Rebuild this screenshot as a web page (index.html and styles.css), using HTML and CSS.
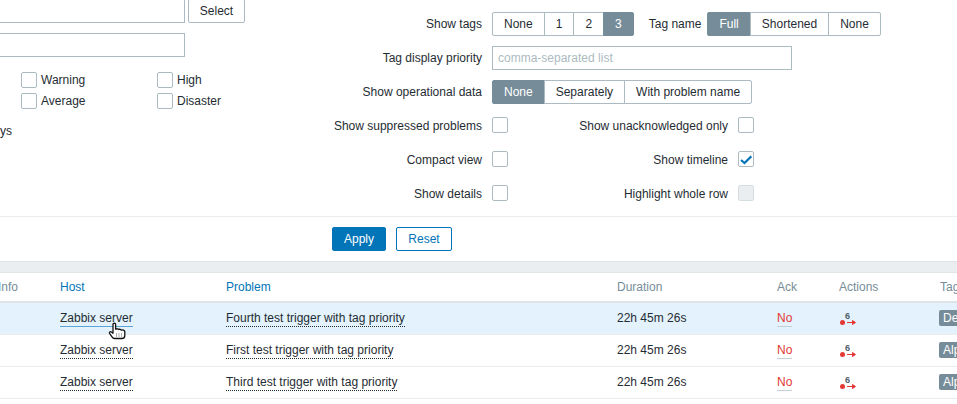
FILE: index.html
```html
<!DOCTYPE html>
<html lang="en">
<head>
<meta charset="utf-8">
<title>Problems</title>
<link rel="stylesheet" href="styles.css">
</head>
<body>
<div class="page">
  <form class="filter">
    <div class="filter-cols">
      <div class="col-left">
        <div class="left-row">
          <input class="text-input wide" type="text">
          <button class="btn-grey" type="button">Select</button>
        </div>
        <div class="left-row">
          <input class="text-input wide" type="text">
        </div>
        <div class="sev-grid">
          <label class="sev"><span class="cb"></span>Warning</label>
          <label class="sev"><span class="cb"></span>High</label>
          <label class="sev"><span class="cb"></span>Average</label>
          <label class="sev"><span class="cb"></span>Disaster</label>
        </div>
        <div class="age">ys</div>
      </div>
      <div class="col-right">
        <div class="frow">
          <span class="flabel">Show tags</span>
          <div class="seg">
            <span class="seg-item">None</span><span class="seg-item">1</span><span class="seg-item">2</span><span class="seg-item on">3</span>
          </div>
          <span class="tagname-label">Tag name</span>
          <div class="seg">
            <span class="seg-item on">Full</span><span class="seg-item">Shortened</span><span class="seg-item">None</span>
          </div>
        </div>
        <div class="frow">
          <span class="flabel">Tag display priority</span>
          <input class="text-input priority" type="text" placeholder="comma-separated list">
        </div>
        <div class="frow">
          <span class="flabel">Show operational data</span>
          <div class="seg">
            <span class="seg-item on">None</span><span class="seg-item">Separately</span><span class="seg-item">With problem name</span>
          </div>
        </div>
        <div class="frow check-row first-check">
          <span class="flabel">Show suppressed problems</span>
          <span class="cb"></span>
          <span class="flabel2">Show unacknowledged only</span>
          <span class="cb"></span>
        </div>
        <div class="frow check-row">
          <span class="flabel">Compact view</span>
          <span class="cb"></span>
          <span class="flabel2">Show timeline</span>
          <span class="cb">
            <svg class="check" viewBox="0 0 12 12" width="12" height="12"><path d="M1 7 L4.5 10 L11.3 3.4" fill="none" stroke="#0275b8" stroke-width="2.2"/></svg>
          </span>
        </div>
        <div class="frow check-row">
          <span class="flabel">Show details</span>
          <span class="cb"></span>
          <span class="flabel2">Highlight whole row</span>
          <span class="cb disabled"></span>
        </div>
      </div>
    </div>
    <div class="filter-actions">
      <button class="btn-apply" type="button">Apply</button>
      <button class="btn-reset" type="button">Reset</button>
    </div>
  </form>
  <div class="band"></div>
  <table class="problems">
    <colgroup>
      <col class="c-info"><col class="c-host"><col class="c-problem"><col class="c-duration"><col class="c-ack"><col class="c-actions"><col class="c-tags">
    </colgroup>
    <thead>
      <tr>
        <th class="muted">Info</th>
        <th class="link">Host</th>
        <th class="link">Problem</th>
        <th class="muted">Duration</th>
        <th class="muted">Ack</th>
        <th class="muted">Actions</th>
        <th class="muted">Tags</th>
      </tr>
    </thead>
    <tbody>
      <tr class="hover">
        <td></td>
        <td><a class="dotted host-hover">Zabbix server</a></td>
        <td><a class="dotted">Fourth test trigger with tag priority</a></td>
        <td>22h 45m 26s</td>
        <td><a class="ack">No</a></td>
        <td><span class="act"><b class="act-n">6</b><svg width="17" height="7" viewBox="0 0 17 7"><circle cx="2.5" cy="3.5" r="2.5" fill="#e33734"/><path d="M7 3.5H14.5M12.5 1.5 15.5 3.5 12.5 5.5Z" fill="#e33734" stroke="#e33734"/></svg></span></td>
        <td><span class="tag">Dev</span></td>
      </tr>
      <tr>
        <td></td>
        <td><a class="dotted">Zabbix server</a></td>
        <td><a class="dotted">First test trigger with tag priority</a></td>
        <td>22h 45m 26s</td>
        <td><a class="ack">No</a></td>
        <td><span class="act"><b class="act-n">6</b><svg width="17" height="7" viewBox="0 0 17 7"><circle cx="2.5" cy="3.5" r="2.5" fill="#e33734"/><path d="M7 3.5H14.5M12.5 1.5 15.5 3.5 12.5 5.5Z" fill="#e33734" stroke="#e33734"/></svg></span></td>
        <td><span class="tag">Alpha</span></td>
      </tr>
      <tr>
        <td></td>
        <td><a class="dotted">Zabbix server</a></td>
        <td><a class="dotted">Third test trigger with tag priority</a></td>
        <td>22h 45m 26s</td>
        <td><a class="ack">No</a></td>
        <td><span class="act"><b class="act-n">6</b><svg width="17" height="7" viewBox="0 0 17 7"><circle cx="2.5" cy="3.5" r="2.5" fill="#e33734"/><path d="M7 3.5H14.5M12.5 1.5 15.5 3.5 12.5 5.5Z" fill="#e33734" stroke="#e33734"/></svg></span></td>
        <td><span class="tag">Alpha</span></td>
      </tr>
    </tbody>
  </table>
  <svg class="cursor" width="18" height="18" viewBox="0 0 18 18">
    <path d="M5 2.2C5 .8 7.6 .8 7.6 2.2V7.2C8.8 6.5 10.2 6.7 10.6 7.5 11.6 7 12.8 7.3 13.2 8.1 14.4 7.6 16.6 8 16.8 9.6V13.4C16.8 15 15.6 16.5 14 16.5H6.4C5 16.5 4.6 15.8 4 14.8L1.6 11.4C1 10.3 2.2 9.2 3.4 10L5 11.2Z" fill="#fff" stroke="#111" stroke-width="1.3" stroke-linejoin="round"/>
    <path d="M8.5 11.5V14.5M11 11.5V14.5M13.5 11.5V14.5" stroke="#666" stroke-width="1" stroke-dasharray="1 1"/>
  </svg>
</div>
</body>
</html>
```

FILE: styles.css
```css
html, body {
  margin: 0;
  padding: 0;
}
body {
  font-family: "Liberation Sans", Arial, sans-serif;
  font-size: 12px;
  color: #1f2c33;
  background: #fff;
}
.page {
  position: relative;
  width: 957px;
  height: 404px;
  overflow: hidden;
}
.filter-cols {
  display: flex;
  height: 216px;
}
.col-left {
  flex: 0 0 332px;
  margin-top: -1px;
}
.left-row {
  display: flex;
  gap: 3px;
  margin-bottom: 10px;
  height: 24px;
}
.text-input {
  box-sizing: border-box;
  height: 24px;
  border: 1px solid #acbbc2;
  background: #fff;
  padding: 0 5px;
  font: inherit;
  color: inherit;
  border-radius: 0;
  outline: none;
}
.text-input::placeholder {
  color: #acbbc2;
  opacity: 1;
}
.wide {
  width: 205px;
  margin-left: -20px;
}
.priority {
  width: 300px;
}
.btn-grey {
  box-sizing: border-box;
  width: 57px;
  height: 24px;
  border: 1px solid #acbbc2;
  border-radius: 2px;
  background: #fff;
  color: #1f2c33;
  font: inherit;
  padding: 0;
}
.sev-grid {
  display: grid;
  grid-template-columns: 136px 100px;
  row-gap: 5px;
  margin-top: 15px;
  padding-left: 21px;
}
.sev {
  display: flex;
  align-items: center;
  height: 16px;
}
.sev .cb {
  margin-right: 4px;
}
.age {
  margin-top: 15px;
  line-height: 14px;
}
.cb {
  box-sizing: border-box;
  display: inline-flex;
  align-items: center;
  justify-content: center;
  flex: 0 0 16px;
  width: 16px;
  height: 16px;
  border: 1px solid #acbbc2;
  border-radius: 2px;
  background: #fff;
}
.cb.disabled {
  background: #ebeef0;
  border-color: #d5dde1;
}
.col-right {
  flex: 1;
  padding-top: 12px;
  min-width: 0;
}
.frow {
  display: flex;
  align-items: center;
  height: 24px;
  margin-bottom: 10px;
}
.first-check {
  margin-top: -1px;
}
.flabel {
  flex: 0 0 150px;
  margin-right: 10px;
  text-align: right;
  white-space: nowrap;
}
.flabel2 {
  flex: 0 0 220px;
  margin-right: 10px;
  text-align: right;
  white-space: nowrap;
}
.check-row .flabel,
.check-row .flabel2 {
  padding-top: 2px;
}
.tagname-label {
  margin-left: 15px;
  margin-right: 6px;
}
.seg {
  display: flex;
  box-sizing: border-box;
  height: 24px;
}
.seg-item {
  box-sizing: border-box;
  display: flex;
  align-items: center;
  height: 24px;
  padding: 0 11px;
  border: 1px solid #acbbc2;
  margin-left: -1px;
  background: #fff;
  white-space: nowrap;
}
.seg-item:first-child {
  margin-left: 0;
  border-radius: 2px 0 0 2px;
}
.seg-item:last-child {
  border-radius: 0 2px 2px 0;
}
.seg-item.on {
  background: #768d99;
  border-color: #768d99;
  color: #fff;
}
.filter-actions {
  display: flex;
  gap: 10px;
  box-sizing: border-box;
  height: 45px;
  padding: 10px 0 0 332px;
  border-top: 1px solid #ebeef0;
}
.btn-apply,
.btn-reset {
  box-sizing: border-box;
  height: 24px;
  border: 1px solid #0275b8;
  border-radius: 2px;
  font: inherit;
  padding: 0;
}
.btn-apply {
  width: 54px;
  background: #0275b8;
  color: #fff;
}
.btn-reset {
  width: 56px;
  background: #fff;
  color: #0275b8;
}
.band {
  box-sizing: border-box;
  height: 12px;
  background: #ebeef0;
  border-top: 1px solid #dfe4e7;
  border-bottom: 1px solid #dfe4e7;
}
.problems {
  table-layout: fixed;
  width: 1142px;
  margin-left: -2px;
  border-collapse: separate;
  border-spacing: 0;
}
.c-info { width: 62px; }
.c-host { width: 166px; }
.c-problem { width: 391px; }
.c-duration { width: 160px; }
.c-ack { width: 62px; }
.c-actions { width: 101px; }
.c-tags { width: 200px; }
.problems th {
  height: 28px;
  padding: 0;
  text-align: left;
  font-weight: normal;
  border-bottom: 2px solid #dfe4e7;
}
.problems .link { color: #0275b8; }
.problems .muted { color: #768d99; }
.problems td {
  box-sizing: border-box;
  height: 32px;
  padding: 0 0 2px;
  border-bottom: 1px solid #ebeef0;
  white-space: nowrap;
}
.hover td { background: #e3f2fc; }
.dotted {
  color: #1f2c33;
  border-bottom: 1px dotted #1f2c33;
  padding-bottom: 1px;
}
.host-hover {
  border-bottom: 1px solid #5aa5d6;
}
.ack {
  color: #e33734;
  border-bottom: 1px solid #c5d0d6;
  padding-bottom: 1px;
}
.act {
  position: relative;
  display: inline-block;
  width: 17px;
  height: 7px;
  margin-left: 1px;
  top: 4px;
}
.act svg {
  display: block;
}
.act-n {
  position: absolute;
  left: 5px;
  top: -8px;
  font-size: 9px;
  line-height: 10px;
  color: #4f6068;
}
.tag {
  display: inline-block;
  height: 16px;
  line-height: 16px;
  padding: 0 4px;
  border-radius: 2px;
  background: #768d99;
  color: #fff;
  margin-left: -1px;
}
.cursor {
  position: absolute;
  left: 108px;
  top: 322px;
}
```
